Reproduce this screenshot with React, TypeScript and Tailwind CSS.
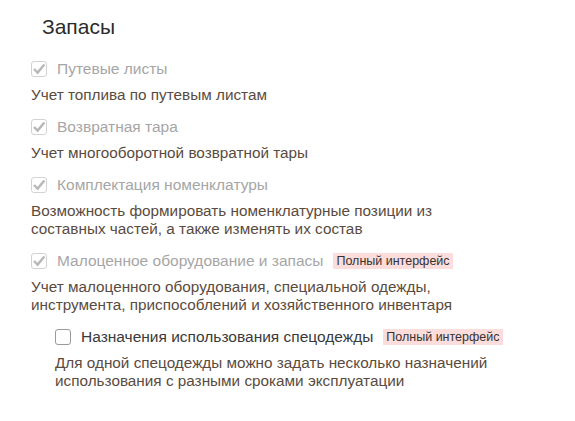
import type { ReactNode } from 'react'

type Option = {
  label: string
  description: string[]
  checked: boolean
  disabled: boolean
  fullInterface?: boolean
  nested?: boolean
}

const OPTIONS: Option[] = [
  {
    label: 'Путевые листы',
    description: ['Учет топлива по путевым листам'],
    checked: true,
    disabled: true,
  },
  {
    label: 'Возвратная тара',
    description: ['Учет многооборотной возвратной тары'],
    checked: true,
    disabled: true,
  },
  {
    label: 'Комплектация номенклатуры',
    description: [
      'Возможность формировать номенклатурные позиции из',
      'составных частей, а также изменять их состав',
    ],
    checked: true,
    disabled: true,
  },
  {
    label: 'Малоценное оборудование и запасы',
    description: [
      'Учет малоценного оборудования, специальной одежды,',
      'инструмента, приспособлений и хозяйственного инвентаря',
    ],
    checked: true,
    disabled: true,
    fullInterface: true,
  },
  {
    label: 'Назначения использования спецодежды',
    description: [
      'Для одной спецодежды можно задать несколько назначений',
      'использования с разными сроками эксплуатации',
    ],
    checked: false,
    disabled: false,
    fullInterface: true,
    nested: true,
  },
]

function CheckBox({ checked, disabled }: { checked: boolean; disabled: boolean }) {
  return (
    <span
      className={
        disabled
          ? 'flex h-[16px] w-[16px] shrink-0 items-center justify-center rounded-[3px] border border-[#d2d2d2] bg-white'
          : 'flex h-[16px] w-[16px] shrink-0 items-center justify-center rounded-[3px] border border-[#9a9a9a] bg-white'
      }
    >
      {checked && (
        <svg viewBox="0 0 14 14" className="h-[14px] w-[14px]" aria-hidden>
          <path d="M2 7 L5.6 10.6 L12.4 2.4" fill="none" stroke="#b8b8b8" strokeWidth="2.4" />
        </svg>
      )}
    </span>
  )
}

function Badge({ children }: { children: ReactNode }) {
  return (
    <span className="bg-[#fddcdc] px-[3px] text-[12.5px] leading-[16px] text-[#333]">
      {children}
    </span>
  )
}

export default function App() {
  return (
    <div className="min-h-[421px] w-[575px] bg-white font-['Liberation_Sans',Arial,sans-serif]">
      <div className="px-[31px] pt-[14px]">
        <h2 className="pl-[11px] text-[21px] leading-[26px] text-[#2b2b2b]">Запасы</h2>
        <ul className="mt-[20px] flex flex-col gap-[14px]">
          {OPTIONS.map((o) => (
            <li key={o.label} className={o.nested ? 'pl-[24px]' : ''}>
              <label className="flex items-center gap-[10px]">
                <CheckBox checked={o.checked} disabled={o.disabled} />
                <span
                  className={
                    o.disabled
                      ? 'text-[15.5px] leading-[18px] text-[#a6a6a6]'
                      : 'text-[15.5px] leading-[18px] text-[#3a3a3a]'
                  }
                >
                  {o.label}
                </span>
                {o.fullInterface && <Badge>Полный интерфейс</Badge>}
              </label>
              <p className="mt-[8px] text-[15.3px] leading-[18px] text-[#5a4b3e]">
                {o.description.map((line) => (
                  <span key={line} className="block">
                    {line}
                  </span>
                ))}
              </p>
            </li>
          ))}
        </ul>
      </div>
    </div>
  )
}
